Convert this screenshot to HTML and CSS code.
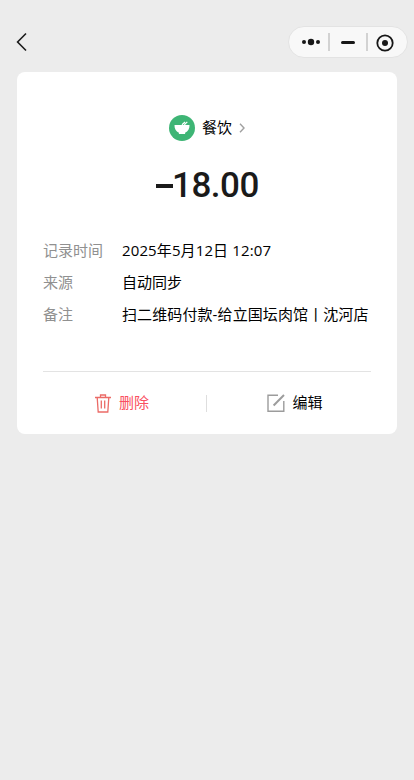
FILE: index.html
```html
<!DOCTYPE html>
<html lang="zh-CN">
<head>
<meta charset="utf-8">
<meta name="viewport" content="width=device-width, initial-scale=1">
<title>账单详情</title>
<link rel="stylesheet" href="styles.css">
</head>
<body>
<header class="nav">
  <svg class="back" width="12" height="20" viewBox="0 0 12 20"><path d="M10 1.5 1.6 10 10 18.5"/></svg>
  <div class="capsule">
    <svg class="dots" width="20" height="8" viewBox="0 0 20 8"><circle cx="3" cy="4" r="2"/><circle cx="10" cy="4" r="3.2"/><circle cx="17" cy="4" r="2"/></svg>
    <i class="split"></i>
    <i class="minimize"></i>
    <i class="split"></i>
    <svg class="close" width="18" height="18" viewBox="0 0 18 18"><circle class="ring" cx="9" cy="9" r="7.7"/><circle cx="9" cy="9" r="3"/></svg>
  </div>
</header>
<main class="card">
  <div class="category">
    <svg width="26" height="26" viewBox="0 0 26 26"><circle cx="13" cy="13" r="13" fill="#3eb575"/><path d="M5.500 10.100h15c.2 3.700-1.500 6.300-4.400 7.600v1.300H9.900v-1.300C7 16.400 5.300 13.800 5.500 10.100Z" fill="#fff"/><path d="m13 9.700 3-2.700M15.300 9.700l3-2.800" stroke="#fff" stroke-width="1.200"/></svg>
    <span>餐饮</span>
    <svg class="more" width="6" height="10" viewBox="0 0 6 10"><path d="m1 .8 4 4.200-4 4.200"/></svg>
  </div>
  <div class="amount"><i class="minus"></i><span>18.00</span></div>
  <dl class="details">
    <dt>记录时间</dt><dd class="time">2025年5月12日 12:07</dd>
    <dt>来源</dt><dd>自动同步</dd>
    <dt>备注</dt><dd class="note">扫二维码付款-给立国坛肉馆丨沈河店</dd>
  </dl>
  <div class="actions">
    <div class="action delete">
      <svg width="16" height="19" viewBox="0 0 16 19"><path d="M0 3.500h16M5.500 3.500V1h5v2.500M2.200 3.500l1 14.500h9.600l1-14.500M6.300 6.500v8M9.700 6.500v8"/></svg>
      <span>删除</span>
    </div>
    <i class="divider"></i>
    <div class="action edit">
      <svg width="18" height="18" viewBox="0 0 18 18"><path d="M11 1.300H1v15.900h15.800V7"/><path class="pen" d="M6.600 11.500 17 1"/></svg>
      <span>编辑</span>
    </div>
  </div>
</main>
</body>
</html>
```
FILE: styles.css
```css
* { box-sizing: border-box; }
body {
  margin: 0;
  min-height: 780px;
  background: #ececec;
  color: #000;
  font: 15px/20px "Open Sans", "Noto Sans CJK SC", sans-serif;
}
svg { display: block; flex: none; fill: none; }
.nav {
  height: 72px;
  padding: 26px 6px 0 16px;
  display: flex;
  justify-content: space-between;
}
.back { margin-top: 6px; stroke: #1b1b1b; stroke-width: 1.6; }
.capsule {
  width: 120px;
  height: 32px;
  padding: 0 13px 0 12px;
  display: flex;
  align-items: center;
  background: #f8f8f8;
  border: 1px solid #e3e3e3;
  border-radius: 16px;
}
.dots, .close { fill: #171717; }
.split { width: 2px; height: 18px; background: #d2d2d2; }
.dots { margin-right: 7px; }
.minimize { width: 14px; height: 3px; margin: 0 11px; border-radius: 2px; background: #171717; }
.close { margin: 2px 0 0 8px; }
.ring { fill: none; stroke: #171717; stroke-width: 1.8; }
.card {
  width: 380px;
  height: 362px;
  margin-left: 17px;
  padding: 43px 26px 0;
  background: #fff;
  border-radius: 8px;
}
.category {
  height: 26px;
  padding-left: 126px;
  display: flex;
  align-items: center;
}
.category span { margin: 0 7px 2px; }
.more { stroke: #a0a0a0; stroke-width: 1.4; }
.amount {
  height: 42px;
  margin-top: 24px;
  padding-left: 113px;
  display: flex;
  align-items: center;
  color: #1a1a1a;
  font: 500 35px/42px Roboto, sans-serif;
  letter-spacing: -.5px;
}
.minus { width: 17px; height: 4px; margin: 0 -1px 1px 0; background: #1a1a1a; }
.details {
  margin: 33px 0 0;
  display: grid;
  grid-template-columns: 79px 1fr;
  grid-auto-rows: 32px;
  line-height: 20px;
  white-space: nowrap;
}
.details dt { color: #909090; }
.details dd { margin: 0; }
.time { letter-spacing: .12px; }
.note { letter-spacing: .1px; }
.actions {
  width: 328px;
  height: 63px;
  margin-top: 35px;
  display: flex;
  align-items: center;
  border-top: 1px solid #e3e3e3;
}
.action { display: flex; align-items: center; }
.action span { margin: 0 0 2px 8px; }
.delete { width: 163px; padding-left: 52px; color: #fa5060; }
.delete svg { stroke: #eb6b67; stroke-width: 1.3; }
.divider { width: 1px; height: 17px; background: #dedede; }
.edit { padding-left: 60px; }
.edit span { margin-left: 7.5px; }
.edit svg { stroke: #9c9c9c; stroke-width: 1.4; }
.edit .pen { stroke-width: 2; }
```
